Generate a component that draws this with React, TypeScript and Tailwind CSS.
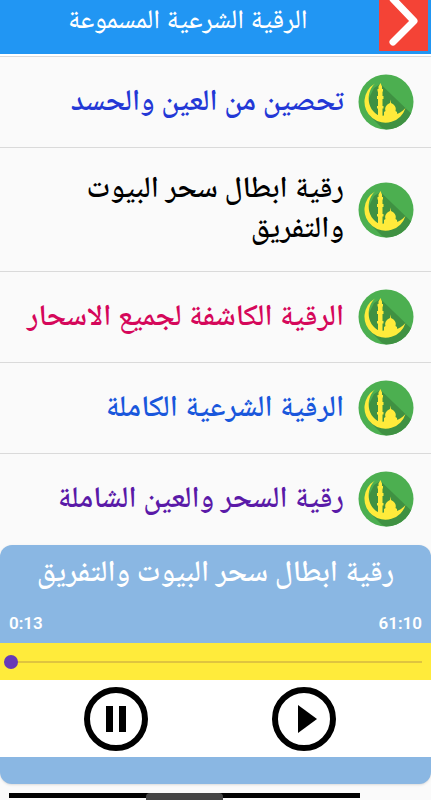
import { useState } from "react";

const tracks = [
  { title: "تحصين من العين والحسد", color: "text-[#2338d6]" },
  { title: "رقية ابطال سحر البيوت والتفريق", color: "text-black" },
  { title: "الرقية الكاشفة لجميع الاسحار", color: "text-[#d5075a]" },
  { title: "الرقية الشرعية الكاملة", color: "text-[#1957dc]" },
  { title: "رقية السحر والعين الشاملة", color: "text-[#5a1aa8]" },
];

function MosqueIcon() {
  return (
    <svg viewBox="0 0 56 56" className="size-14 shrink-0" aria-hidden="true">
      <defs>
        <clipPath id="disc">
          <circle cx="28" cy="28" r="27.5" />
        </clipPath>
      </defs>
      <circle cx="28" cy="28" r="27.5" fill="#4caf50" />
      <path d="M22.500 10 L62 48 L50 66 L24 54 L12 42 L10 26 L16 14 Z" fill="#3f9142" clipPath="url(#disc)" />
      <path
        d="M17 9.500 A21 21 0 1 0 47.500 34 C44 38 41 39.500 38 40 L22 42 C9 37 7 19 17 9.500 Z"
        fill="#ffeb3b"
      />
      <path
        d="M22.500 9 L24 12.500 V15 H25 V17.500 H24.500 V22 H25.500 V25 H24.500 V32 H25.500 V34.500 H24.500 V44 H20 V34.500 H19 V32 H20 V25 H19 V22 H20 V17.500 H19.500 V15 H20.500 V12.500 Z"
        fill="#ffeb3b"
      />
      <path
        d="M32.500 25.500 L33 29 C37 31 38.500 33.500 37.500 37 L39 38 V44 H26 V38 L27.500 37 C26.500 33.500 28 31 32 29 Z"
        fill="#ffeb3b"
      />
    </svg>
  );
}

export default function App() {
  const [position, setPosition] = useState(0);

  return (
    <div className="flex h-screen flex-col overflow-hidden bg-[#fafafa] font-['Noto_Naskh_Arabic_UI','Noto_Naskh_Arabic','DejaVu_Sans',sans-serif]">
      <header className="flex h-[54px] shrink-0 items-start bg-[#2196f3] pr-[3px]">
        <h1 dir="rtl" className="flex-1 pt-0.5 pr-1 text-center text-[27px] leading-10 font-medium text-white">
          الرقية الشرعية المسموعة
        </h1>
        <button aria-label="التالي" className="h-[51px] w-[49px] bg-[#f44336]">
          <svg viewBox="0 0 49 51" fill="none" stroke="white" strokeWidth="7" strokeLinecap="round" strokeLinejoin="round">
            <path d="M14 -1 L35 21 L14 42" />
          </svg>
        </button>
      </header>

      <main className="min-h-0 flex-1 overflow-hidden border-t-2 border-white">
        <ul dir="rtl">
          {tracks.map((track) => (
            <li key={track.title} className="border-t border-[#dadada]">
              <button className={`flex w-full items-center gap-3.5 py-[17px] pr-[17px] pl-6 text-right ${track.color}`}>
                <MosqueIcon />
                <span className="flex-1 pt-[5px] pb-1 text-[30px] leading-10 font-semibold">{track.title}</span>
              </button>
            </li>
          ))}
        </ul>
      </main>

      <section className="shrink-0 rounded-xl bg-[#8ab7e3] pb-[27px] shadow-sm">
        <h2 dir="rtl" className="pt-[9px] text-center text-[30px] leading-10 font-semibold text-white">
          رقية ابطال سحر البيوت والتفريق
        </h2>
        <div className="flex justify-between px-[9px] pt-[19px] pb-2.5 font-[Roboto,sans-serif] text-[17px] leading-5 font-semibold text-white">
          <span>0:13</span>
          <span>61:10</span>
        </div>
        <div className="flex h-[37px] items-center bg-[#ffeb3b] pr-[9px] pl-1">
          <input
            type="range"
            min={0}
            max={3670}
            value={position}
            onChange={(e) => setPosition(Number(e.target.value))}
            aria-label="موضع التشغيل"
            className="h-3.5 w-full appearance-none bg-transparent bg-linear-to-r from-[#dfc43f] to-[#dfc43f] bg-[length:100%_2px] bg-center bg-no-repeat [&::-webkit-slider-thumb]:size-3.5 [&::-webkit-slider-thumb]:appearance-none [&::-webkit-slider-thumb]:rounded-full [&::-webkit-slider-thumb]:bg-[#673ab7]"
          />
        </div>
        <div className="flex h-[77px] items-center justify-center gap-[122px] bg-white pr-3">
          <button aria-label="إيقاف مؤقت">
            <svg viewBox="0 0 66 66" className="size-[66px]">
              <circle cx="33" cy="33" r="29" fill="none" stroke="black" strokeWidth="6" />
              <path d="M23 20h7v26h-7zM36 20h7v26h-7z" />
            </svg>
          </button>
          <button aria-label="تشغيل">
            <svg viewBox="0 0 66 66" className="size-[66px]">
              <circle cx="33" cy="33" r="29" fill="none" stroke="black" strokeWidth="6" />
              <path d="M27 19 L46 33 L27 47 Z" />
            </svg>
          </button>
        </div>
      </section>

      <footer className="flex h-4 shrink-0 items-end pl-[9px]">
        <div className="mr-[71px] flex h-[7px] flex-1 items-start bg-linear-to-b from-black from-[5px] to-transparent to-[5px] pl-[137px]">
          <div className="h-[7px] w-[77px] rounded-t-sm bg-[#444]" />
        </div>
      </footer>
    </div>
  );
}
